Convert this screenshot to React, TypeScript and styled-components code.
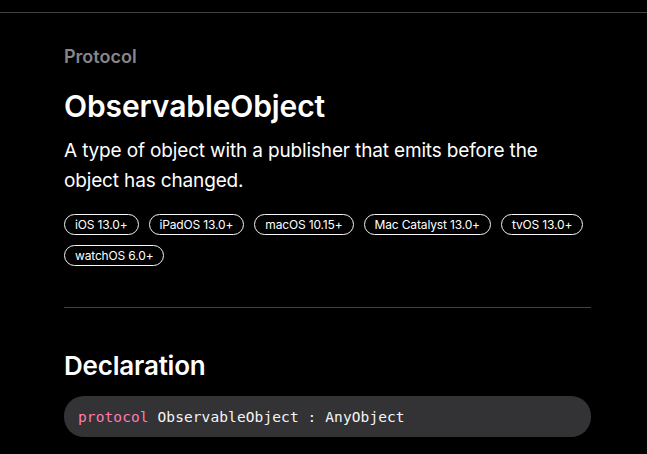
import React from 'react';
import styled, { createGlobalStyle } from 'styled-components';

const GlobalStyle = createGlobalStyle`
  html, body {
    margin: 0;
    padding: 0;
    background: #000;
  }
  body {
    font-family: Inter, "Noto Sans", sans-serif;
    color: #fff;
    -webkit-font-smoothing: antialiased;
  }
`;

const Page = styled.div`
  min-height: 454px;
  background: #000;
  padding-top: 12px;
`;

const TopRule = styled.hr`
  margin: 0;
  border: none;
  border-top: 1px solid #424245;
`;

const Content = styled.main`
  width: 527px;
  margin: 0 auto 0 64px;
  padding-top: 32px;
`;

const Eyebrow = styled.div`
  font-size: 18px;
  font-weight: 600;
  color: #86868b;
  line-height: 24px;
`;

const Title = styled.h1`
  margin: 19px 0 0;
  font-size: 30px;
  font-weight: 600;
  line-height: 36px;
  letter-spacing: -0.1px;
`;

const Abstract = styled.p`
  margin: 12px 0 0;
  font-size: 19px;
  line-height: 30px;
  font-weight: 400;
  letter-spacing: -0.15px;
`;

const Availability = styled.ul`
  list-style: none;
  margin: 18px 0 0;
  padding: 0;
  display: flex;
  flex-wrap: wrap;
  gap: 10px 10px;
`;

const Badge = styled.li`
  border: 1px solid #f5f5f7;
  border-radius: 12px;
  height: 21px;
  box-sizing: border-box;
  padding: 0 10px;
  display: flex;
  align-items: center;
  font-size: 12px;
  letter-spacing: -0.15px;
  color: #fff;
`;

const Divider = styled.hr`
  margin: 41px 0 0;
  border: none;
  border-top: 1px solid #424245;
`;

const SectionTitle = styled.h2`
  margin: 42px 0 0;
  font-size: 26px;
  font-weight: 600;
  line-height: 32px;
  letter-spacing: -0.2px;
`;

const CodeBox = styled.pre`
  margin: 14px 0 0;
  background: #333336;
  border-radius: 20px;
  height: 41px;
  box-sizing: border-box;
  padding: 0 14px;
  display: flex;
  align-items: center;
  font-family: "DejaVu Sans Mono", "Liberation Mono", monospace;
  font-size: 14.5px;
  letter-spacing: 0.1px;
  color: #f5f5f7;
`;

const Keyword = styled.span`
  color: #ff7ab2;
`;

const platforms = [
  'iOS 13.0+',
  'iPadOS 13.0+',
  'macOS 10.15+',
  'Mac Catalyst 13.0+',
  'tvOS 13.0+',
  'watchOS 6.0+',
];

export default function App() {
  return (
    <>
      <GlobalStyle />
      <Page>
        <TopRule />
        <Content>
          <Eyebrow>Protocol</Eyebrow>
          <Title>ObservableObject</Title>
          <Abstract>
            A type of object with a publisher that emits before the object has changed.
          </Abstract>
          <Availability>
            {platforms.map((p) => (
              <Badge key={p}>{p}</Badge>
            ))}
          </Availability>
          <Divider />
          <SectionTitle>Declaration</SectionTitle>
          <CodeBox>
            <Keyword>protocol</Keyword> ObservableObject : AnyObject
          </CodeBox>
        </Content>
      </Page>
    </>
  );
}
